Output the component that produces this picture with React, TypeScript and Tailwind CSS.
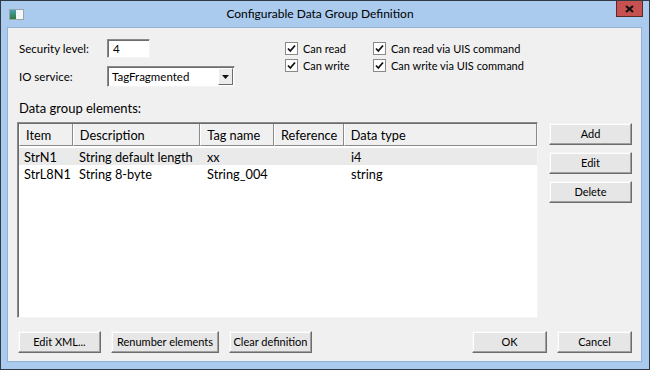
import React from 'react';

const columns = [
  { label: 'Item', w: 'w-[54px]' },
  { label: 'Description', w: 'w-[128px]' },
  { label: 'Tag name', w: 'w-[74px]' },
  { label: 'Reference', w: 'w-[70px]' },
  { label: 'Data type', w: 'w-[194px]' },
];

const rows = [
  { item: 'StrN1', desc: 'String default length', tag: 'xx', ref: '', type: 'i4', hl: true },
  { item: 'StrL8N1', desc: 'String 8-byte', tag: 'String_004', ref: '', type: 'string', hl: false },
];

const Button: React.FC<{ label: string; w: string }> = ({ label, w }) => (
  <div
    className={`${w} h-[22px] text-[11px] whitespace-nowrap flex items-center justify-center bg-[#e6e6e6] border border-t-[#f4f4f4] border-l-[#f4f4f4] border-b-[#6d6d6d] border-r-[#6d6d6d] shadow-[inset_-1px_-1px_0_#a0a0a0,inset_1px_1px_0_#ffffff]`}
  >
    {label}
  </div>
);

const Check: React.FC<{ label: string }> = ({ label }) => (
  <div className="flex items-center h-[17px] whitespace-nowrap text-[11px]">
    <div className="w-[13px] h-[13px] bg-white border border-[#8a8a8a] flex items-center justify-center">
      <svg width="9" height="9" viewBox="0 0 9 9">
        <path d="M1 4.5 L3.3 7 L8 1.5" fill="none" stroke="#111" strokeWidth="1.8" />
      </svg>
    </div>
    <span className="ml-[5px]">{label}</span>
  </div>
);

const sunken = 'border border-t-[#8a8a8a] border-l-[#8a8a8a] border-b-[#f4f4f4] border-r-[#f4f4f4] shadow-[inset_1px_1px_0_#6d6d6d]';

export default function App() {
  return (
    <div className="w-[650px] h-[370px] bg-[#aacbee] border border-[#2f3a46] flex flex-col font-['Lato','Liberation_Sans',sans-serif] text-[12px] text-black leading-[14px] overflow-hidden">
      {/* title bar */}
      <div className="h-[26px] flex items-start relative shrink-0">
        <div className="mt-[8px] ml-[8px] w-[15px] h-[11px] border border-[#9aa4ad] bg-[#eef2f5] flex">
          <div className="w-[6px] h-full bg-[linear-gradient(180deg,#4aa0b0,#2f7a3d)]" />
          <div className="flex-1 bg-[#f4f6f8]" />
        </div>
        <div className="flex-1 text-center mt-[6px] text-[12px]">Configurable Data Group Definition</div>
        <div className="w-[27px] h-[17px] mr-[6px] -mt-px bg-[#c75050] border border-[#5a2a2a] flex items-center justify-center">
          <svg width="9" height="8" viewBox="0 0 9 8">
            <path d="M1 1 L8 7 M8 1 L1 7" stroke="#111" strokeWidth="2.2" />
          </svg>
        </div>
      </div>

      {/* client area */}
      <div className="ml-[6px] mr-[7px] mb-[7px] flex-1 bg-[#f0f0f0] border border-[#93b1d2] flex flex-col pt-[11px] px-[9px] pb-[8px]">
        {/* top settings */}
        <div className="flex h-[48px] shrink-0">
          <div className="ml-[2px] w-[266px] flex flex-col gap-[8px] text-[11.5px]">
            <div className="flex items-center h-[19px]">
              <span className="w-[88px]">Security level:</span>
              <div className={`w-[43px] h-[19px] bg-white pl-[5px] flex items-center ${sunken}`}>4</div>
            </div>
            <div className="flex items-center h-[21px]">
              <span className="w-[88px]">IO service:</span>
              <div className={`w-[128px] h-[21px] bg-white pl-[4px] flex items-center ${sunken}`}>
                <span className="flex-1">TagFragmented</span>
                <div className="w-[15px] h-[17px] mr-px bg-[#ececec] border border-t-[#fff] border-l-[#fff] border-b-[#6d6d6d] border-r-[#6d6d6d] flex items-center justify-center">
                  <svg width="7" height="4" viewBox="0 0 7 4">
                    <path d="M0 0 H7 L3.5 4 Z" fill="#111" />
                  </svg>
                </div>
              </div>
            </div>
          </div>
          <div className="w-[88px] flex flex-col mt-[1px]">
            <Check label="Can read" />
            <Check label="Can write" />
          </div>
          <div className="flex flex-col mt-[1px]">
            <Check label="Can read via UIS command" />
            <Check label="Can write via UIS command" />
          </div>
        </div>

        <div className="mt-[14px] ml-[2px] h-[14px] text-[13px]">Data group elements:</div>

        {/* list + side buttons */}
        <div className="mt-[7px] flex h-[196px] shrink-0">
          <div className={`w-[521px] h-full bg-white flex flex-col text-[12.75px] ${sunken}`}>
            <div className="flex h-[22px] bg-[#f0f0f0] ml-px mt-px">
              {columns.map((c) => (
                <div
                  key={c.label}
                  className={`${c.w} h-full pl-[6px] flex items-center border-l border-l-[#ffffff] border-r border-r-[#8a8a8a] border-b border-b-[#8a8a8a]`}
                >
                  {c.label}
                </div>
              ))}
            </div>
            <div className="mt-[2px] ml-px">
              {rows.map((r) => (
                <div key={r.item} className={`flex h-[17px] items-center whitespace-nowrap ${r.hl ? 'bg-[#eaeaea]' : ''}`}>
                  <span className="w-[54px] pl-[5px]">{r.item}</span>
                  <span className="w-[128px] pl-[6px]">{r.desc}</span>
                  <span className="w-[74px] pl-[6px]">{r.tag}</span>
                  <span className="w-[70px] pl-[6px]">{r.ref}</span>
                  <span className="w-[182px] pl-[6px]">{r.type}</span>
                </div>
              ))}
            </div>
          </div>
          <div className="ml-[11px] mt-[1px] flex flex-col gap-[7px]">
            <Button label="Add" w="w-[83px]" />
            <Button label="Edit" w="w-[83px]" />
            <Button label="Delete" w="w-[83px]" />
          </div>
        </div>

        {/* bottom buttons */}
        <div className="mt-[13px] flex h-[22px] shrink-0 ml-px">
          <Button label="Edit XML..." w="w-[83px]" />
          <div className="ml-[10px]"><Button label="Renumber elements" w="w-[108px]" /></div>
          <div className="ml-[10px]"><Button label="Clear definition" w="w-[83px]" /></div>
          <div className="ml-auto"><Button label="OK" w="w-[75px]" /></div>
          <div className="ml-[10px]"><Button label="Cancel" w="w-[75px]" /></div>
        </div>
      </div>
    </div>
  );
}
